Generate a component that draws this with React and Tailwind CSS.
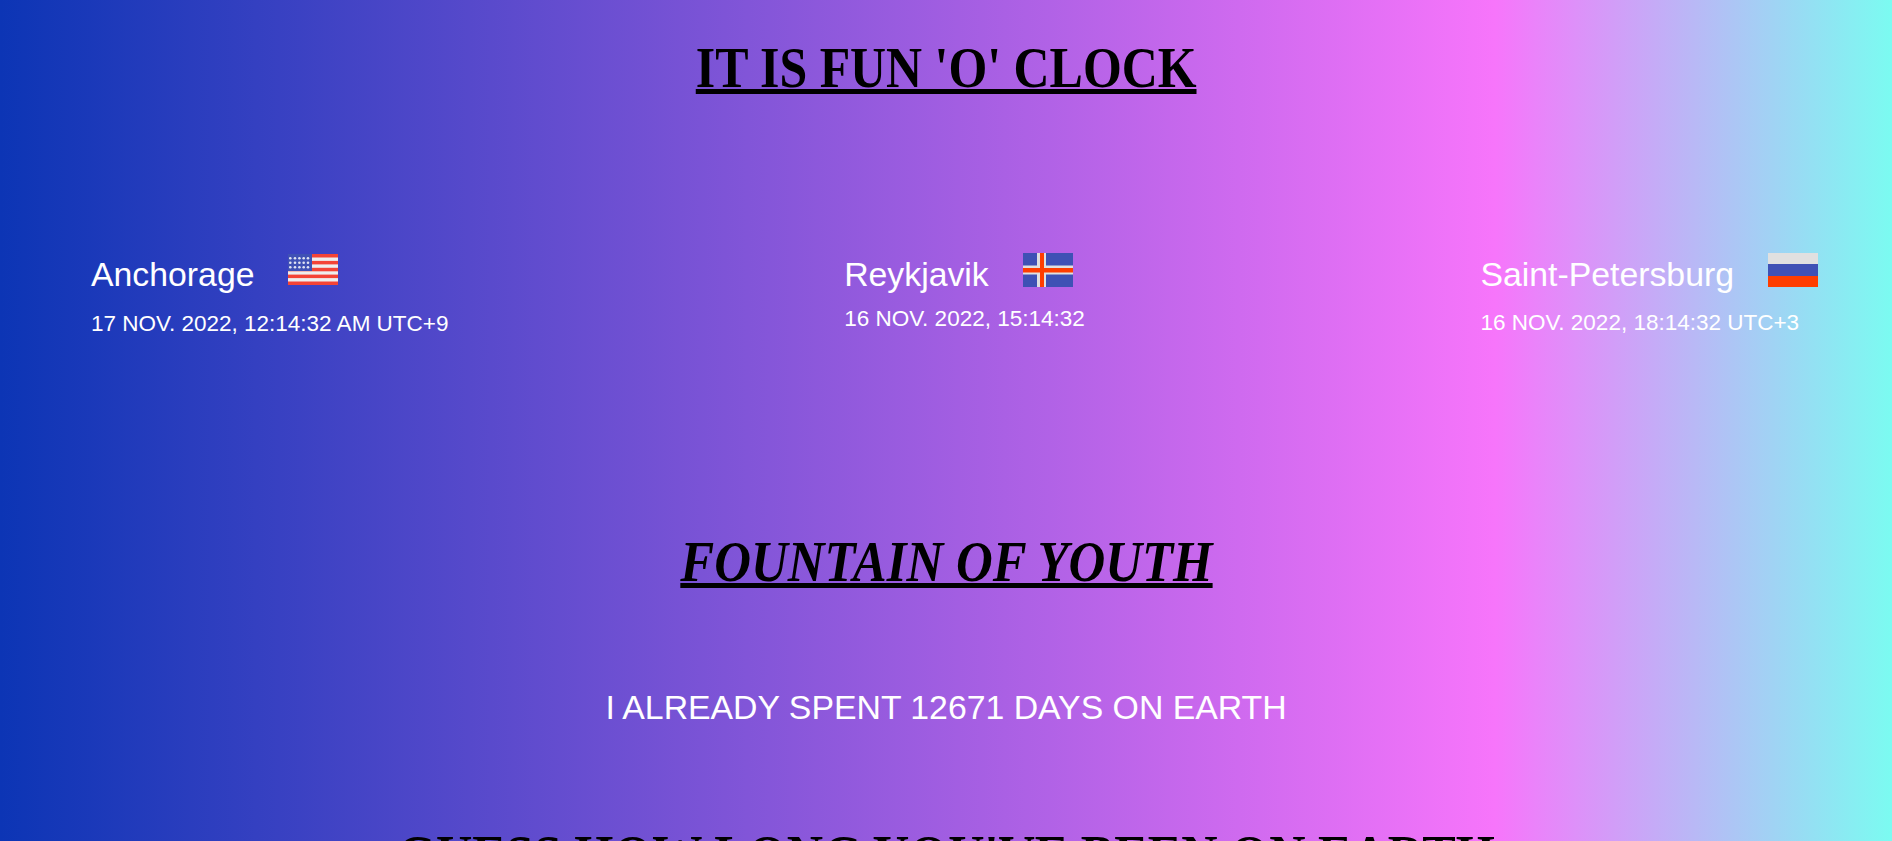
const serif = { fontFamily: '"Liberation Serif", serif' };

const UsFlag = () => (
  <svg width="50" height="31" viewBox="0 0 50 31" className="block mt-px">
    <rect width="50" height="31" fill="#eeeeee" />
    {[0, 6.9, 13.8, 20.6, 27.5].map((y) => (
      <rect key={y} y={y} width="50" height="3.5" fill="#f44336" />
    ))}
    <rect width="24" height="17" fill="#3f51b5" />
    {[4.3, 8.7, 13.3].map((y) =>
      [2.3, 7, 11.4, 15.7, 20].map((x) => (
        <circle key={`${x}-${y}`} cx={x} cy={y} r="1.3" fill="#dfe3f3" />
      ))
    )}
  </svg>
);

const IsFlag = () => (
  <svg width="50" height="34" viewBox="0 0 50 34" className="block">
    <rect width="50" height="34" fill="#3f51b5" />
    <rect x="14" width="9" height="34" fill="#e0e0e0" />
    <rect y="12.5" width="50" height="9" fill="#e0e0e0" />
    <rect x="17" width="4" height="34" fill="#ff3d00" />
    <rect y="15" width="50" height="4.5" fill="#ff3d00" />
  </svg>
);

const RuFlag = () => (
  <div className="w-[50px] h-[34px] flex flex-col">
    <div className="flex-1 bg-[#e0e0e0]" />
    <div className="flex-1 bg-[#3f51b5]" />
    <div className="flex-1 bg-[#ff3d00]" />
  </div>
);

const cities = [
  { name: 'Anchorage', time: '17 NOV. 2022, 12:14:32 AM UTC+9', flag: <UsFlag />, mt: 'mt-[14px]' },
  { name: 'Reykjavik', time: '16 NOV. 2022, 15:14:32', flag: <IsFlag />, mt: 'mt-[9px]' },
  { name: 'Saint-Petersburg', time: '16 NOV. 2022, 18:14:32 UTC+3', flag: <RuFlag />, mt: 'mt-[13px]' },
];

export default function App() {
  return (
    <div
      className="h-screen overflow-hidden text-white bg-[linear-gradient(90deg,#0c35b5_0%,#f775fb_79%,#7bfbf1_100%)]"
      style={{ fontFamily: '"Liberation Sans", sans-serif' }}
    >
      <h1 className="pt-[34px] text-center text-[58px] leading-[68px] font-bold text-black" style={serif}>
        <span className="inline-block scale-x-[0.86] underline decoration-[5px] underline-offset-[2px] [text-decoration-skip-ink:none]">IT IS FUN 'O' CLOCK</span>
      </h1>

      <div className="mt-[151px] pl-[91px] pr-[74px] flex justify-between items-start">
        {cities.map((c) => (
          <div key={c.name}>
            <div className="flex items-start gap-[34px]">
              <span className="text-[33.8px] leading-[42px]">{c.name}</span>
              {c.flag}
            </div>
            <p className={`${c.mt} text-[22.5px] leading-[30px]`}>{c.time}</p>
          </div>
        ))}
      </div>

      <h2 className="mt-[189px] text-center text-[58px] leading-[68px] font-bold italic text-black" style={serif}>
        <span className="inline-block scale-x-[0.877] underline decoration-[5px] underline-offset-[2px] [text-decoration-skip-ink:none]">FOUNTAIN OF YOUTH</span>
      </h2>

      <p className="mt-[90px] text-center text-[33.8px] leading-[42px]">I ALREADY SPENT 12671 DAYS ON EARTH</p>

      <h2 className="mt-[94px] text-center text-[58px] leading-[68px] font-bold text-black whitespace-nowrap" style={serif}>
        <span className="inline-block scale-x-[0.866]">GUESS HOW LONG YOU'VE BEEN ON EARTH</span>
      </h2>
    </div>
  );
}
